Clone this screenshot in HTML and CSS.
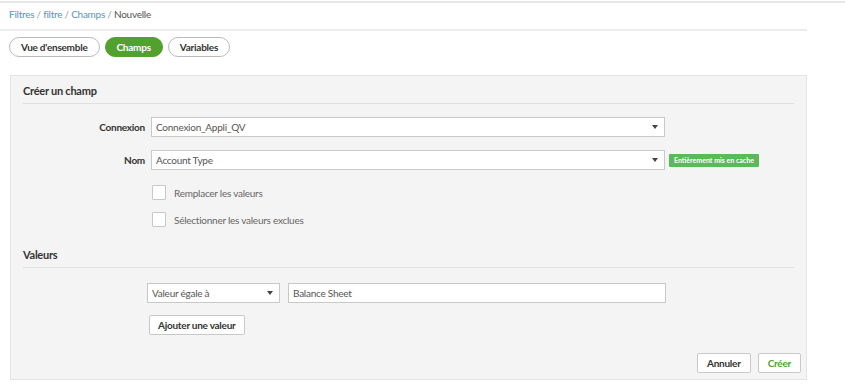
FILE: index.html
```html
<!DOCTYPE html>
<html lang="fr">
<head>
    <meta charset="UTF-8">
    <title>Nouvelle - Champs</title>
    <link rel="stylesheet" href="styles.css">
</head>
<body>
    <div class="topbar"></div>

    <div class="breadcrumb">
        <a href="#">Filtres</a> / <a href="#">filtre</a> / <a href="#">Champs</a> / <span class="current">Nouvelle</span>
    </div>

    <div class="tabs">
        <a href="#" class="tab">Vue d'ensemble</a>
        <a href="#" class="tab active">Champs</a>
        <a href="#" class="tab">Variables</a>
    </div>

    <div class="panel">
        <div class="section-title">Créer un champ</div>

        <div class="form-row">
            <label class="form-label">Connexion</label>
            <div class="select wide">
                <span>Connexion_Appli_QV</span>
                <span class="caret"></span>
            </div>
        </div>

        <div class="form-row">
            <label class="form-label">Nom</label>
            <div class="select wide">
                <span>Account Type</span>
                <span class="caret"></span>
            </div>
            <span class="badge">Entièrement mis en cache</span>
        </div>

        <div class="check-row">
            <span class="checkbox"></span>
            <span>Remplacer les valeurs</span>
        </div>
        <div class="check-row">
            <span class="checkbox"></span>
            <span>Sélectionner les valeurs exclues</span>
        </div>

        <div class="section-title values-title">Valeurs</div>

        <div class="value-row">
            <div class="select small">
                <span>Valeur égale à</span>
                <span class="caret"></span>
            </div>
            <div class="text-input">Balance Sheet</div>
        </div>

        <div class="add-row">
            <button class="btn add-btn">Ajouter une valeur</button>
        </div>

        <div class="actions">
            <button class="btn">Annuler</button>
            <button class="btn green-text">Créer</button>
        </div>
    </div>
</body>
</html>
```

FILE: styles.css
```css
body {
    font-family: Lato, "Open Sans", sans-serif;
    font-size: 10px;
    letter-spacing: -0.25px;
    color: #444;
    margin: 0;
    padding: 0;
    background: white;
    width: 847px;
    height: 386px;
    overflow: hidden;
}
/* Top */
.topbar {
    height: 2px;
    margin-top: 1px;
    background: #e6e6e6;
    width: 845px;
}
.breadcrumb {
    padding: 5px 9px 0;
    height: 21px;
    color: #999;
    border-bottom: 2px solid #ececec;
    width: 789px;
}
.breadcrumb a {
    color: #5b94b5;
    text-decoration: none;
}
.breadcrumb .current {
    color: #555;
}
/* Tabs */
.tabs {
    display: flex;
    gap: 5px;
    padding: 6px 9px 0;
}
.tab {
    display: inline-block;
    height: 18px;
    line-height: 18px;
    padding: 0 11px;
    border: 1px solid #bbb;
    border-radius: 10px;
    color: #333;
    font-weight: bold;
    text-decoration: none;
    background: white;
}
.tab.active {
    background: #52a02e;
    border-color: #52a02e;
    color: white;
}
/* Panel */
.panel {
    margin: 18px 0 0 10px;
    width: 783px;
    height: 291px;
    padding: 6px;
    background: #f4f4f4;
    border: 1px solid #e4e4e4;
    position: relative;
}
.section-title {
    font-weight: bold;
    font-size: 11px;
    color: #333;
    margin: 0 6px;
    padding: 2px 0 6px;
    border-bottom: 1px solid #e0e0e0;
}
.values-title {
    margin-top: 19px;
}
.form-row {
    display: flex;
    align-items: center;
    margin-top: 13px;
}
.form-row + .form-row {
    margin-top: 13px;
}
.form-label {
    width: 128px;
    text-align: right;
    font-weight: bold;
    color: #333;
    margin-right: 6px;
}
.select {
    background: white;
    border: 1px solid #c8c8c8;
    height: 18px;
    display: flex;
    align-items: center;
    justify-content: space-between;
    padding: 0 6px 0 4px;
    color: #555;
}
.select.wide {
    width: 502px;
}
.select.small {
    width: 121px;
}
.caret {
    width: 0;
    height: 0;
    border-left: 3px solid transparent;
    border-right: 3px solid transparent;
    border-top: 4px solid #444;
}
.badge {
    margin-left: 4px;
    background: #5cb85c;
    color: white;
    font-size: 7px;
    letter-spacing: 0;
    font-weight: bold;
    height: 13px;
    line-height: 13px;
    padding: 0 5px;
    border-radius: 1px;
}
.check-row {
    display: flex;
    align-items: center;
    gap: 8px;
    margin-left: 135px;
    margin-top: 15px;
    color: #666;
}
.check-row + .check-row {
    margin-top: 12px;
}
.checkbox {
    width: 12px;
    height: 13px;
    background: white;
    border: 1px solid #c8c8c8;
    border-radius: 1px;
}
.value-row {
    display: flex;
    gap: 8px;
    margin: 15px 0 0 130px;
}
.text-input {
    width: 368px;
    height: 18px;
    line-height: 18px;
    padding: 0 4px;
    background: white;
    border: 1px solid #c8c8c8;
    color: #555;
}
.add-row {
    margin: 12px 0 0 132px;
}
.btn {
    font-family: Lato, "Open Sans", sans-serif;
    font-size: 10px;
    letter-spacing: -0.25px;
    font-weight: bold;
    color: #333;
    background: white;
    border: 1px solid #c8c8c8;
    border-radius: 2px;
    height: 20px;
    padding: 0 6px;
}
.add-btn {
    padding: 0 8px;
}
.actions {
    position: absolute;
    right: 5px;
    bottom: 6px;
    display: flex;
    gap: 7px;
}
.actions .btn {
    padding: 0 9px;
}
.green-text {
    color: #52a02e;
}
```
